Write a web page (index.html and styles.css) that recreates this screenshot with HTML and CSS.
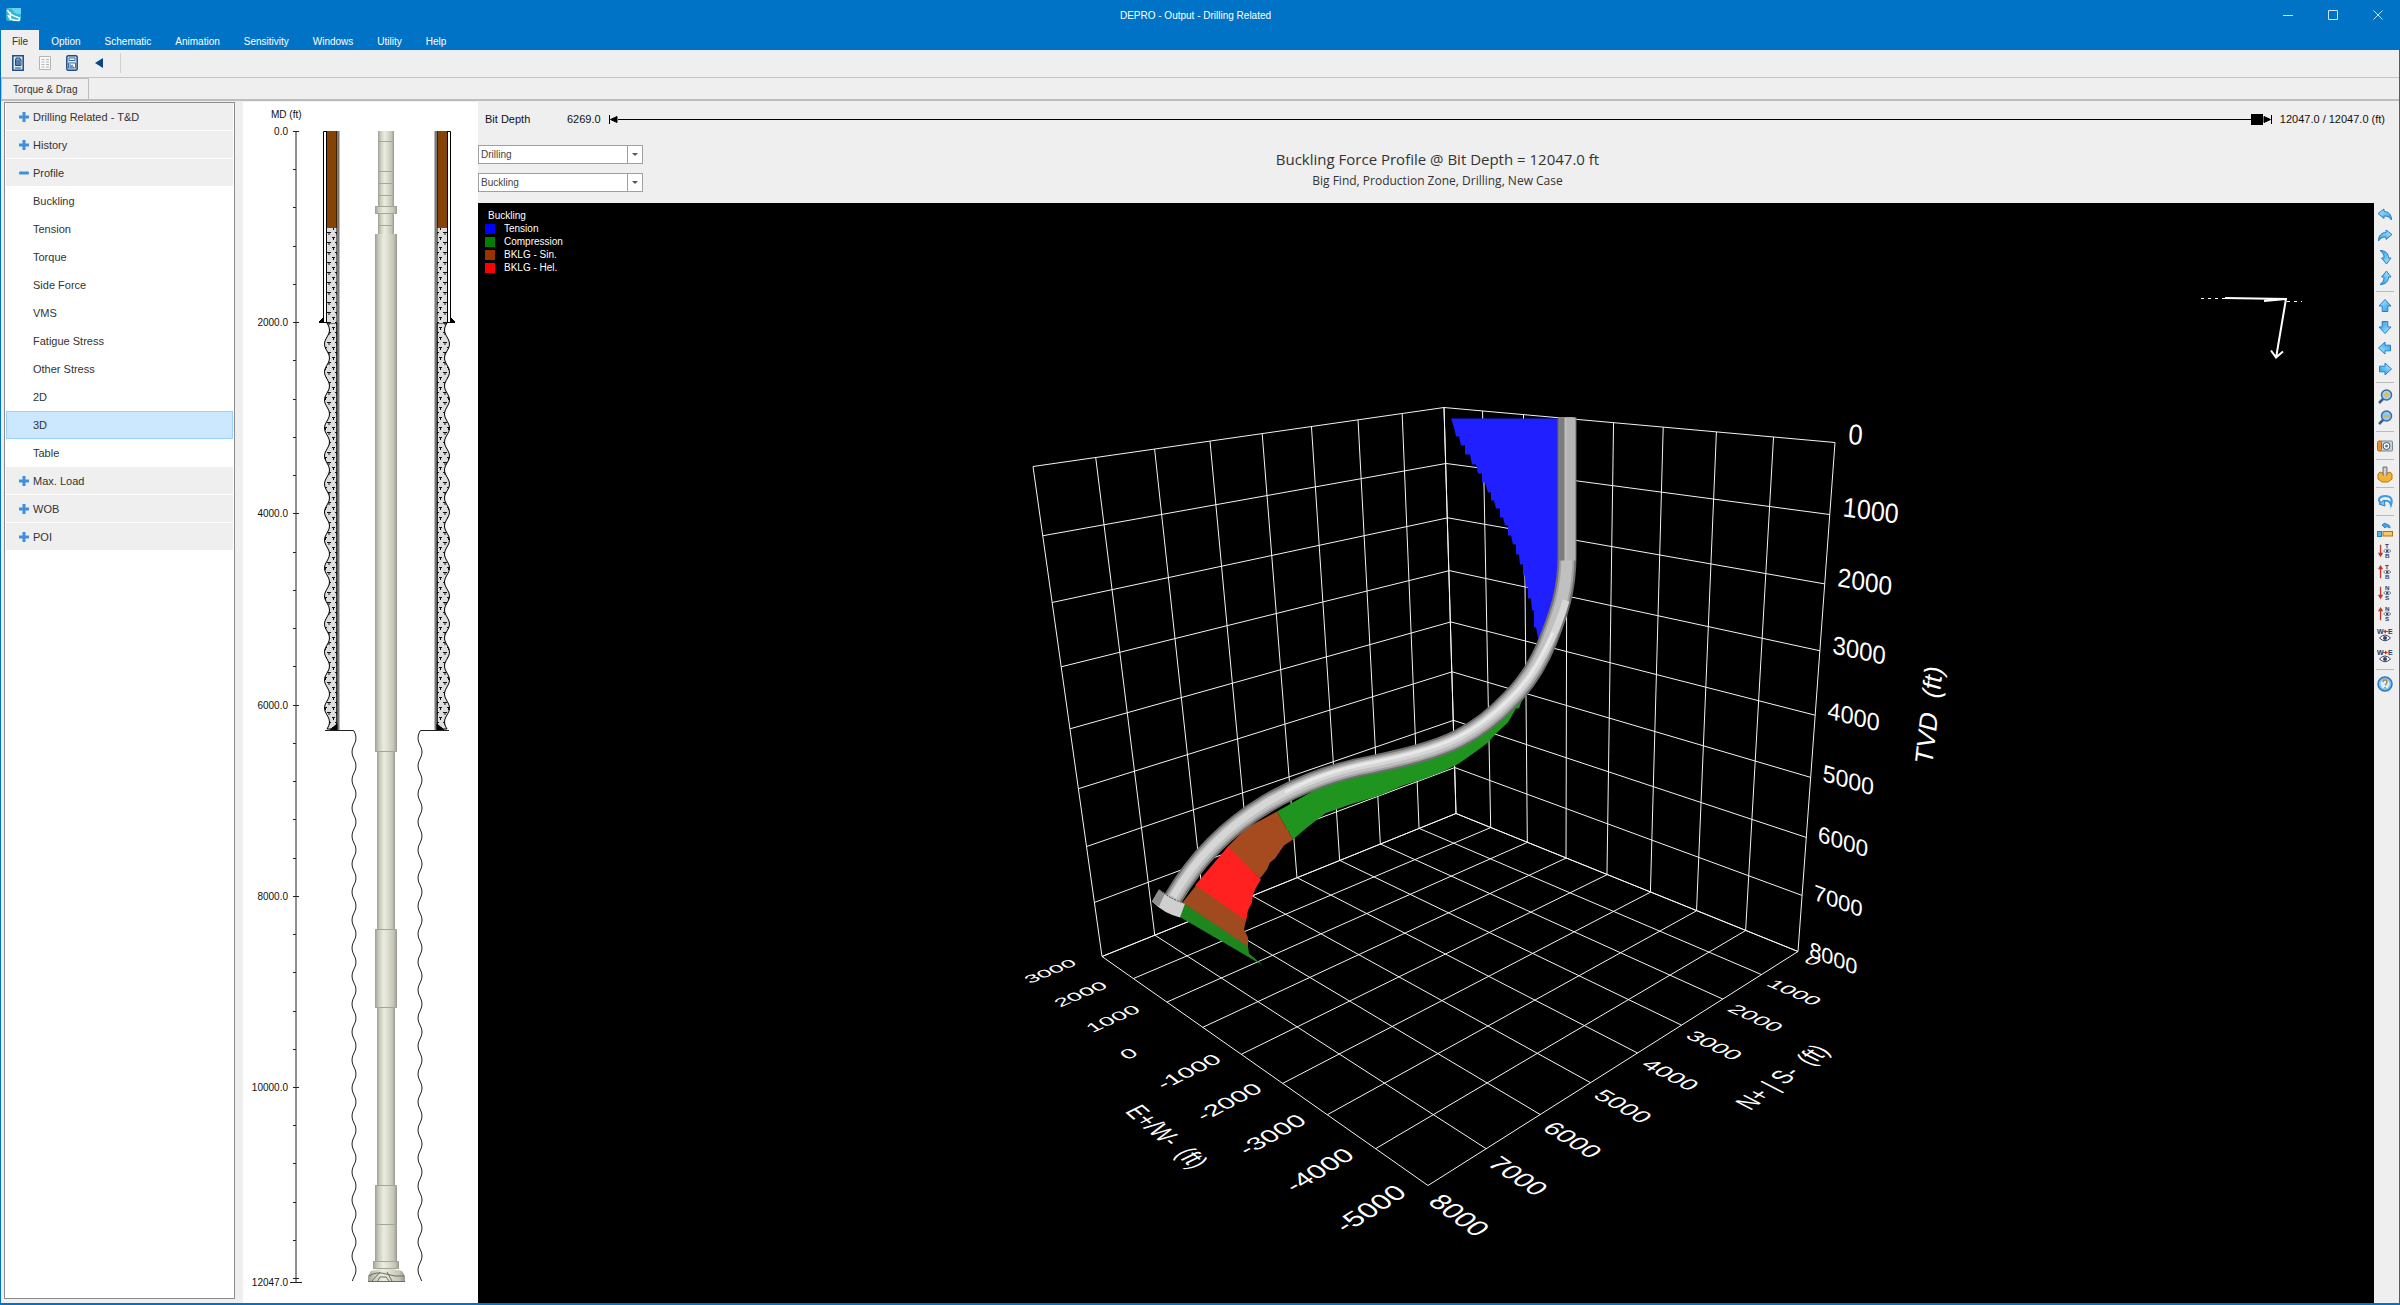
FILE: index.html
```html
<!DOCTYPE html>
<html lang="en">
<head>
  <meta charset="UTF-8">
  <meta name="viewport" content="width=device-width, initial-scale=1.0">
  <title>DEPRO - Output - Drilling Related</title>
  <link rel="stylesheet" href="styles.css">
</head>
<body>
  <!-- Shared icons -->
  <svg class="defs" aria-hidden="true">
    <defs>
      <linearGradient id="blueFill" x1="0" y1="0" x2="1" y2="1">
        <stop offset="0" stop-color="#b5ecff"/>
        <stop offset="1" stop-color="#1f9be8"/>
      </linearGradient>
      <symbol id="arrow" viewBox="0 0 16 16">
        <path d="M8 1.500 14 8h-3.200v5.500H5.200V8H2z" fill="url(#blueFill)" stroke="#2a7fc4" stroke-linejoin="round"/>
      </symbol>
      <symbol id="bend" viewBox="0 0 16 16">
        <path d="M1 6.500 7 2v2.500c4.500 0 7.500 3 7.500 8.500-2-3-4-4-7.500-4V11.500z" fill="url(#blueFill)" stroke="#2a7fc4" stroke-linejoin="round"/>
      </symbol>
      <symbol id="eye" viewBox="0 0 12 8">
        <path d="M.5 4Q6-2 11.500 4 6 9.500.5 4z" fill="#fff" stroke="#34466a"/>
        <circle cx="6" cy="4" r="2" fill="#34466a"/>
      </symbol>
      <symbol id="plus" viewBox="0 0 12 12">
        <path d="M4.500 1h3v3.500H11v3H7.500V11h-3V7.500H1v-3h3.500z" fill="#3f8fdc"/>
      </symbol>
      <symbol id="minus" viewBox="0 0 12 12">
        <rect x="1" y="4.500" width="10" height="3" rx="1" fill="#3f8fdc"/>
      </symbol>
    </defs>
  </svg>

  <header class="titlebar">
    <svg class="app-logo" viewBox="0 0 16 14" aria-hidden="true">
      <rect width="15" height="13" rx="2" fill="#2fb4d8"/>
      <path d="M0 0h15v6Q8 7 6 1z" fill="#68d4ea"/>
      <path d="M1.500 2Q3 7 13.500 10l-.5 2.500Q4 13 2 7M4 4q1 5 0 8" fill="none" stroke="#fff" stroke-width="1.500"/>
    </svg>
    <h1 class="title">DEPRO - Output - Drilling Related</h1>
    <div class="window-buttons">
      <button aria-label="Minimize"><svg viewBox="0 0 10 10"><path d="M0 5.500h10"/></svg></button>
      <button aria-label="Maximize"><svg viewBox="0 0 10 10"><path d="M.5.5h9v9h-9z"/></svg></button>
      <button aria-label="Close"><svg viewBox="0 0 10 10"><path d="M.5.5l9 9M9.500.5l-9 9"/></svg></button>
    </div>
  </header>

  <nav class="menu">
    <button class="active">File</button>
    <button>Option</button>
    <button>Schematic</button>
    <button>Animation</button>
    <button>Sensitivity</button>
    <button>Windows</button>
    <button>Utility</button>
    <button>Help</button>
  </nav>

  <div class="toolbar">
    <button aria-label="Report">
      <svg viewBox="0 0 12 16"><path d="M.8.8h10.400v14.400H.800z" fill="#dbe8f4" stroke="#1e4f80" stroke-width="1.500"/><path d="M4 3h4v1.500h1v6H3.500v-6H4zM5 5v6M7 5v6M3 13h6" fill="#8aabca" stroke="#1e4f80"/></svg>
    </button>
    <button aria-label="Table">
      <svg viewBox="0 0 12 16"><path d="M.5 1.500h11v13H.500z" fill="#f8f8f8" stroke="#b5b5b5"/><path d="M2.500 4.500h3M7 4.500h3M2.500 7h3M7 7h3M2.500 9.500h3M7 9.500h3M2.500 12h3M7 12h3" stroke="#b5b5b5"/></svg>
    </button>
    <button aria-label="Calculator">
      <svg viewBox="0 0 12 16"><rect x=".8" y=".8" width="10.400" height="14.400" rx="1.500" fill="#d4e3f0" stroke="#1e4f80" stroke-width="1.500"/><path d="M3 3h6v2.500H3z" fill="#fff" stroke="#3c6f9e"/><path d="M2.500 8h7v5h-7zM4 9v3h4M5 11l2-1" fill="#fff" stroke="#3c6f9e"/></svg>
    </button>
    <button aria-label="Back">
      <svg viewBox="0 0 12 16"><path d="M10 3v10L2 8z" fill="#0c4680"/></svg>
    </button>
  </div>

  <div class="tabs"><button>Torque &amp; Drag</button></div>

  <main class="content">
    <nav class="sidebar">
      <button class="group"><svg><use href="#plus"/></svg>Drilling Related - T&amp;D</button>
      <button class="group"><svg><use href="#plus"/></svg>History</button>
      <button class="group"><svg><use href="#minus"/></svg>Profile</button>
      <button class="item">Buckling</button>
      <button class="item">Tension</button>
      <button class="item">Torque</button>
      <button class="item">Side Force</button>
      <button class="item">VMS</button>
      <button class="item">Fatigue Stress</button>
      <button class="item">Other Stress</button>
      <button class="item">2D</button>
      <button class="item selected">3D</button>
      <button class="item">Table</button>
      <button class="group"><svg><use href="#plus"/></svg>Max. Load</button>
      <button class="group"><svg><use href="#plus"/></svg>WOB</button>
      <button class="group"><svg><use href="#plus"/></svg>POI</button>
    </nav>

    <section class="schematic">
      <svg viewBox="243 102 235 1198" preserveAspectRatio="xMinYMin meet">
        <defs>
          <linearGradient id="pipe">
            <stop offset="0" stop-color="#9c9e92"/>
            <stop offset=".15" stop-color="#c6c8ba"/>
            <stop offset=".4" stop-color="#ecede0"/>
            <stop offset=".6" stop-color="#dcddcf"/>
            <stop offset=".85" stop-color="#c2c4b6"/>
            <stop offset="1" stop-color="#969889"/>
          </linearGradient>
          <pattern id="brick" width="8" height="10" patternUnits="userSpaceOnUse" x="327">
            <rect width="8" height="10" fill="#dedede"/>
            <path d="M0 2.500h4M2 2.500v2.500M5 7.500h3M6.500 7.500v2.500" stroke="#111"/>
          </pattern>
          <g id="wellSide">
            <path id="formation" fill="url(#brick)" stroke="#000"/>
            <path d="M327 228h10v95h-10z" fill="url(#brick)"/>
            <path d="M327 131h10v97h-10z" fill="#854305"/>
            <path d="M323.500 322V131.500h3.500M326.500 131v191M337 131v599" fill="none" stroke="#000"/>
            <path d="M338.500 131v599" stroke="#777" stroke-width="2"/>
            <path d="M319 322.500h8M323 318v4h-4zM337 724v6h-7z" stroke="#000"/>
            <path id="openHole" fill="none" stroke="#222"/>
          </g>
        </defs>
        <text x="271" y="118">MD (ft)</text>
        <g id="depthAxis"></g>
        <use href="#wellSide"/>
        <use href="#wellSide" transform="translate(774 0) scale(-1 1)"/>
        <g fill="url(#pipe)">
          <rect x="378" y="131" width="16" height="104"/>
          <rect x="375" y="206" width="22" height="8" rx="1"/>
          <rect x="375" y="234" width="22" height="518"/>
          <rect x="377" y="752" width="18" height="178"/>
          <rect x="375" y="930" width="22" height="78"/>
          <rect x="377" y="1008" width="18" height="178"/>
          <rect x="375" y="1186" width="22" height="76"/>
          <rect x="373" y="1261" width="26" height="8" rx="1"/>
          <path d="M371 1271q15-5 31 0l3 5v6h-37v-6z"/>
        </g>
        <path d="M378 141.500h16M378 171.500h16M378 183.500h16M378 195.500h16M378 225.500h16M375 206.500h22M375 213.500h22M375 751.500h22M375 929.500h22M375 1007.500h22M375 1185.500h22M375 1224.500h22M373 1261.500h26M373 1268.500h26" stroke="#a3a598"/>
        <path d="M369 1276q8-5 17-2t18 2M372 1281l8-9M392 1281l-5-9M368 1281.500h37M377 1282l3-5h6l4 5" stroke="#6d6e62" fill="none"/>
      </svg>
    </section>

    <section class="viewer">
      <div class="depth">
        <label for="bitDepth">Bit Depth</label>
        <output>6269.0</output>
        <svg class="stop" viewBox="0 0 9 9"><path d="M.5 0v9"/><path d="M1.500 4.500 8 1.500v6z"/></svg>
        <input type="range" id="bitDepth" min="6269" max="12047" value="12047">
        <svg class="stop" viewBox="0 0 9 9"><path d="M8.500 0v9"/><path d="M7.500 4.500 1 1.500v6z"/></svg>
        <output>12047.0 / 12047.0 (ft)</output>
      </div>

      <div class="heading">
        <div class="selects">
          <div class="select"><select aria-label="Operation"><option>Drilling</option></select></div>
          <div class="select"><select aria-label="Result"><option>Buckling</option></select></div>
        </div>
        <div class="caption">
          <h2>Buckling Force Profile @ Bit Depth = 12047.0 ft</h2>
          <p>Big Find, Production Zone, Drilling, New Case</p>
        </div>
      </div>

      <div class="stage">
        <div class="canvas">
          <ul class="legend">
            <li class="legend-title">Buckling</li>
            <li class="tension">Tension</li>
            <li class="compression">Compression</li>
            <li class="sinusoidal">BKLG - Sin.</li>
            <li class="helical">BKLG - Hel.</li>
          </ul>
          <svg class="scene" viewBox="478 204 1896 1097">
            <defs>
              <path id="wellPath" d="M1567 417V555C1567 590 1559 612 1548 640C1538 665 1527 682 1511 698C1496 714 1479 728 1459 738C1433 751 1400 758 1373 764C1333 771 1296 786 1267 803C1232 824 1198 855 1173 898"/>
            </defs>
            <path id="grid" class="grid"/>

            <path fill="#1f1fff" d="M1451 418H1567V560L1556 620 1542 645 1538 637 1536 627H1534V610H1532L1531 598H1528V587H1526L1525 575H1523V564H1520L1519 554H1516V544H1513L1511 535H1508V525H1505L1503 517H1500V508H1496L1494 500H1491V492H1488L1485 482H1482V473H1478L1476 464H1472L1470 454H1465V445H1461L1459 436H1456L1454 427Z"/>
            <path fill="#1f951f" d="M1523 697L1519 708H1516L1508 722 1497 732 1488 742 1476 751 1459 763 1443 771 1425 778 1403 785 1380 795 1350 804 1325 813 1307 827 1293 839 1277 811 1333 779 1413 757 1470 738Z"/>
            <path fill="#a64b20" d="M1277 811l16 28-9 6-9 13-5 4-3 7-7 9-33-31 20-20z"/>
            <path fill="#ff2020" d="M1228 846l33 33-5 8-3 7-1 8-4 8-2 11-51-36z"/>
            <path fill="#a04a20" d="M1196 885l50 35-2 9 4 8v10l-67-43z"/>
            <path fill="#1f851f" d="M1184 903l64 43 1 7 14 12-84-49z"/>

            <g class="tube">
              <use href="#wellPath" stroke="#6f6f6f" stroke-width="19"/>
              <use href="#wellPath" stroke="#a2a2a2" stroke-width="15"/>
              <use href="#wellPath" stroke="#c0c0c0" stroke-width="11"/>
              <path d="M1571 417V560" stroke="#b4b4b4" stroke-width="9"/>
              <path d="M1562 417V560" stroke="#7c7c7c" stroke-width="5"/>
              <path d="M1566 600C1557 632 1536 674 1511 698C1496 713 1479 727 1459 737C1433 750 1400 757 1373 763C1333 770 1296 785 1267 802C1232 823 1198 854 1173 896" stroke="#d6d6d6" stroke-width="7"/>
              <path d="M1553 632C1538 665 1527 681 1511 697C1496 712 1479 726 1459 736C1433 749 1400 756 1373 762C1340 768 1310 778 1285 792" stroke="#e8e8e8" stroke-width="3"/>
            </g>
            <path d="M1159 889q14 10 26 14l-5 14q-16-4-28-16z" fill="#cfcfcf"/>
            <path d="M1159 889l-7 12 7 5 6-13z" fill="#909090"/>
            <path d="M1159 889q12 10 26 14" stroke="#444" stroke-dasharray="2 1" fill="none"/>

            <g id="axisLabels" class="axis-labels"></g>

            <g fill="none" stroke="#fff" stroke-width="2">
              <path d="M2225 297.500l61 1-10 59M2271 350l5 7 7-6M2264 300.500l22-2"/>
              <path d="M2201 298h24M2287 301h15" stroke-width="1" stroke-dasharray="3 4"/>
            </g>
          </svg>
        </div>

        <div class="tools">
          <button aria-label="Rotate left"><svg><use href="#bend"/></svg></button>
          <button aria-label="Rotate right"><svg class="mirror"><use href="#bend"/></svg></button>
          <button aria-label="Tilt down"><svg class="tilt-down"><use href="#bend"/></svg></button>
          <button aria-label="Tilt up"><svg class="tilt-up"><use href="#bend"/></svg></button>
          <hr>
          <button aria-label="Move up"><svg><use href="#arrow"/></svg></button>
          <button aria-label="Move down"><svg class="down"><use href="#arrow"/></svg></button>
          <button aria-label="Move left"><svg class="left"><use href="#arrow"/></svg></button>
          <button aria-label="Move right"><svg class="right"><use href="#arrow"/></svg></button>
          <hr>
          <button aria-label="Zoom in"><svg viewBox="0 0 16 16"><path d="M2 14l5-5" stroke="#445c8c" stroke-width="2.500"/><circle cx="9.500" cy="6" r="5" fill="#a8d4f4" stroke="#3a6cac" stroke-width="1.500"/><path d="M6.500 6h6M9.500 3v6" stroke="#d8c050" stroke-width="2"/></svg></button>
          <button aria-label="Zoom out"><svg viewBox="0 0 16 16"><path d="M2 14l5-5" stroke="#445c8c" stroke-width="2.500"/><circle cx="9.500" cy="6" r="5" fill="#8cccf4" stroke="#3a6cac" stroke-width="1.500"/><path d="M6.500 6h6" stroke="#c8b860" stroke-width="2"/></svg></button>
          <hr>
          <button aria-label="Snapshot"><svg viewBox="0 0 16 16"><rect x="3" y="3" width="12.500" height="10" rx="1" fill="#c9d2da" stroke="#7b8791"/><rect x=".5" y="3" width="4" height="10" rx="1.500" fill="#f0912e" stroke="#b8651a"/><circle cx="9.500" cy="8" r="3.500" fill="#fff" stroke="#44576a"/><circle cx="9.500" cy="8" r="1.500" fill="#56789a"/></svg></button>
          <hr>
          <button aria-label="Settings"><svg viewBox="0 0 16 16"><path d="M1 8l2-2 2 1 3-2 3 2 2-1 2 2v5l-4 3H5l-4-3z" fill="#f5b335" stroke="#b5761a"/><path d="M6 1h4v8H6z" fill="#b9b9b9" stroke="#777"/><path d="M8 2v8" stroke="#eee"/></svg></button>
          <hr>
          <button aria-label="Spin"><svg viewBox="0 0 16 16"><path d="M4 9C-1 5 4 2 8 2c6 0 8 3 6 9-1-4-4-5-7-4" fill="none" stroke="#3a9be4" stroke-width="2"/><path d="M2 10l5-4 1 6z" fill="#7fc8f5" stroke="#2a7fc4"/></svg></button>
          <hr>
          <button aria-label="Restore view"><svg viewBox="0 0 16 16"><path d="M5 3l3-2v1q5 0 5 4-2-2-5-1v1z" fill="#4aa8ea" stroke="#2a7fc4"/><rect x=".5" y="9.500" width="4" height="5" fill="#58b4f0" stroke="#2a7fc4"/><rect x="6" y="9.500" width="9.500" height="4.500" fill="#f6c667" stroke="#a87722"/></svg></button>
          <button aria-label="View top to bottom"><svg viewBox="0 0 16 18"><path d="M3 2v11" stroke="#c0392b" stroke-width="1.500"/><path d="M0 11h6l-3 5z" fill="#c0392b"/><text x="8" y="6">T</text><text x="8" y="17">B</text><use href="#eye" x="6" y="6" width="9" height="6"/></svg></button>
          <button aria-label="View bottom to top"><svg viewBox="0 0 16 18"><path d="M3 4v12" stroke="#c0392b" stroke-width="1.500"/><path d="M0 6h6L3 1z" fill="#c0392b"/><text x="8" y="6">T</text><text x="8" y="17">B</text><use href="#eye" x="6" y="6" width="9" height="6"/></svg></button>
          <button aria-label="View north to south"><svg viewBox="0 0 16 18"><path d="M3 2v11" stroke="#c0392b" stroke-width="1.500"/><path d="M0 11h6l-3 5z" fill="#c0392b"/><text x="8" y="6">N</text><text x="8" y="17">S</text><use href="#eye" x="6" y="6" width="9" height="6"/></svg></button>
          <button aria-label="View south to north"><svg viewBox="0 0 16 18"><path d="M3 4v12" stroke="#c0392b" stroke-width="1.500"/><path d="M0 6h6L3 1z" fill="#c0392b"/><text x="8" y="6">N</text><text x="8" y="17">S</text><use href="#eye" x="6" y="6" width="9" height="6"/></svg></button>
          <button aria-label="View east to west"><svg viewBox="0 0 16 16"><text x="0" y="7">W</text><text x="11" y="7">E</text><path d="M7 4.500h4" stroke="#c0392b"/><path d="M6 4.500l3-2v4z" fill="#c0392b"/><use href="#eye" x="2" y="7" width="12" height="8"/></svg></button>
          <button aria-label="View west to east"><svg viewBox="0 0 16 16"><text x="0" y="7">W</text><text x="11" y="7">E</text><path d="M6 4.500h4" stroke="#c0392b"/><path d="M11 4.500l-3-2v4z" fill="#c0392b"/><use href="#eye" x="2" y="7" width="12" height="8"/></svg></button>
          <hr>
          <button aria-label="Help"><svg viewBox="0 0 16 16"><circle cx="8" cy="8" r="7" fill="#7cc0ee" stroke="#2d78bd" stroke-width="1.500"/><circle cx="8" cy="8" r="4.500" fill="#d9effb"/><path d="M6 6q0-2 2-2t2 2-2 3M8 11v1.500" fill="none" stroke="#b58a3a" stroke-width="1.500"/></svg></button>
        </div>
      </div>
    </section>
  </main>

  <script src="script.js"></script>
</body>
</html>
```
FILE: styles.css
```css
* {
  margin: 0;
  padding: 0;
  box-sizing: border-box;
}

body {
  display: flex;
  flex-direction: column;
  height: 100vh;
  border: 1px solid #0173c7;
  border-top: none;
  border-bottom-width: 2px;
  background-color: #efefef;
  color: #333;
  font-family: "Liberation Sans", Arial, sans-serif;
  font-size: 11px;
  overflow: hidden;
}

button {
  border: none;
  background: none;
  color: inherit;
  font: inherit;
}

.defs {
  position: absolute;
  width: 0;
  height: 0;
}

/* Title bar and menu */
.titlebar {
  display: grid;
  grid-template-columns: 1fr auto 1fr;
  align-items: center;
  height: 30px;
  padding: 0 14px 0 5px;
  background-color: #0173c7;
  color: #fff;
}

.app-logo {
  width: 16px;
  height: 14px;
}

.title {
  font-size: 10px;
  font-weight: 400;
}

.window-buttons {
  display: flex;
  justify-content: flex-end;
  gap: 33px;
}

.window-buttons button {
  width: 12px;
  height: 12px;
}

.window-buttons svg {
  display: block;
  width: 10px;
  height: 10px;
  fill: none;
  stroke: #cfe4f5;
}

.menu {
  display: flex;
  height: 20px;
  background-color: #0173c7;
}

.menu button {
  padding: 2px 12px 0;
  color: #fff;
  font-size: 10px;
}

.menu .active {
  padding: 2px 11px 0;
  background-color: #efefef;
  color: #333;
}

.toolbar {
  display: flex;
  align-items: center;
  gap: 15px;
  height: 28px;
  padding: 0 0 2px 11px;
  border-bottom: 1px solid #c4c4c4;
}

.toolbar svg {
  display: block;
  width: 12px;
  height: 16px;
}

.toolbar::after {
  content: "";
  width: 1px;
  height: 20px;
  background-color: #d0d0d0;
}

.tabs {
  display: flex;
  align-items: flex-end;
  height: 23px;
  border-bottom: 2px solid #bdbdbd;
}

.tabs button {
  height: 21px;
  padding: 0 11px;
  border: 1px solid #bdbdbd;
  border-bottom: none;
  font-size: 10px;
}

/* Main area */
.content {
  display: grid;
  grid-template-columns: 231px 235px 1fr;
  column-gap: 8px;
  flex: 1;
  min-height: 0;
  padding: 1px 2px 0 3px;
}

.sidebar {
  display: flex;
  flex-direction: column;
  margin-bottom: 4px;
  padding: 0 1px;
  border: 1px solid #8c8c8c;
  background-color: #fff;
}

.sidebar button {
  display: flex;
  align-items: center;
  gap: 3px;
  height: 28px;
  border-bottom: 1px solid #fff;
  text-align: left;
}

.sidebar .group {
  padding-left: 12px;
  background-color: #efefef;
}

.sidebar .item {
  padding-left: 27px;
}

.sidebar .selected {
  border: 1px solid #99d1ff;
  background-color: #cce8ff;
  padding-left: 26px;
}

.sidebar svg {
  width: 12px;
  height: 12px;
}

.schematic {
  min-height: 0;
  background-color: #fff;
}

.schematic svg {
  display: block;
  width: 100%;
  height: 100%;
}

.schematic text {
  fill: #111;
  font-size: 10px;
}

.schematic .depth-value {
  text-anchor: end;
}

.viewer {
  display: flex;
  flex-direction: column;
  min-width: 0;
  min-height: 0;
  margin-left: -8px;
}

.depth {
  display: flex;
  align-items: center;
  height: 34px;
  padding: 0 12px 0 7px;
  color: #111;
}

.depth label {
  width: 82px;
}

.depth output:last-child {
  padding-left: 8px;
}

.stop {
  width: 9px;
  height: 9px;
  stroke: #000;
}

.depth output + .stop {
  margin-left: 8px;
}

.depth input {
  flex: 1;
  height: 12px;
  appearance: none;
  background: linear-gradient(#000, #000) center / 100% 1px no-repeat;
}

.depth input::-webkit-slider-thumb {
  appearance: none;
  width: 12px;
  height: 11px;
  background-color: #000;
}

.heading {
  display: grid;
  grid-template-columns: 165px 1fr 165px;
  height: 67px;
  padding-top: 9px;
}

.selects {
  display: flex;
  flex-direction: column;
  gap: 9px;
}

.select {
  position: relative;
  height: 19px;
}

.select select {
  width: 100%;
  height: 19px;
  padding-left: 2px;
  appearance: none;
  border: 1px solid #a0a0a0;
  border-radius: 0;
  background: linear-gradient(#a0a0a0, #a0a0a0) right 14px top / 1px 100% no-repeat #fff;
  color: #444;
  font: inherit;
  font-size: 10px;
}

.select::after {
  content: "";
  position: absolute;
  top: 8px;
  right: 5px;
  border: 3px solid transparent;
  border-top-color: #555;
}

.caption {
  padding-top: 4px;
  text-align: center;
  font-family: "Open Sans", sans-serif;
}

.caption h2 {
  font-size: 15px;
  font-weight: 400;
  line-height: 20px;
}

.caption p {
  padding-top: 4px;
  font-size: 12px;
  line-height: 16px;
}

.stage {
  display: grid;
  grid-template-columns: 1fr 23px;
  flex: 1;
  min-height: 0;
}

.canvas {
  position: relative;
  min-height: 0;
  background-color: #000;
}

.scene {
  display: block;
  width: 100%;
  height: 100%;
}

.legend {
  position: absolute;
  top: 6px;
  left: 7px;
  list-style: none;
  color: #fff;
  font-size: 10px;
  line-height: 13px;
}

.legend li {
  display: flex;
  align-items: center;
  gap: 9px;
}

.legend li::before {
  content: "";
  width: 10px;
  height: 10px;
}

.legend .legend-title {
  padding-left: 3px;
}

.legend .legend-title::before {
  display: none;
}

.tension::before { background-color: #0000ff; }
.compression::before { background-color: #008000; }
.sinusoidal::before { background-color: #993300; }
.helical::before { background-color: #ff0000; }

.grid {
  fill: none;
  stroke: #f4f4f4;
}

.tube {
  fill: none;
}

.axis-labels {
  fill: #fff;
  font-size: 20px;
}

/* View tools on the right edge */
.tools {
  display: flex;
  flex-direction: column;
  padding: 1px 3px 0 2px;
}

.tools button {
  display: flex;
  align-items: center;
  justify-content: center;
  height: 21px;
}

.tools svg {
  width: 16px;
  height: 16px;
  overflow: visible;
}

.tools text {
  fill: #2c3e66;
  font-size: 7px;
  font-weight: 700;
}

.tools hr {
  margin: 3px 0;
  border: none;
  border-top: 1px solid #bbb;
}

.mirror { transform: scaleX(-1); }
.tilt-down { transform: scaleX(-1) rotate(-90deg); }
.tilt-up { transform: rotate(90deg); }
.down { transform: rotate(180deg); }
.left { transform: rotate(-90deg); }
.right { transform: rotate(90deg); }
```
FILE: script.js
```js
const SVG_NS = 'http://www.w3.org/2000/svg';
const CELLS = 8;

function addText(parent, text, attributes) {
  const node = document.createElementNS(SVG_NS, 'text');
  node.textContent = text;
  for (const name in attributes) {
    node.setAttribute(name, attributes[name]);
  }
  parent.appendChild(node);
}

// Projects a plane of 8 x 8 cells onto the screen, given its four corners
function plane(p0, p1, p2, p3) {
  const dx1 = p1[0] - p2[0], dy1 = p1[1] - p2[1];
  const dx2 = p3[0] - p2[0], dy2 = p3[1] - p2[1];
  const sx = p0[0] - p1[0] + p2[0] - p3[0];
  const sy = p0[1] - p1[1] + p2[1] - p3[1];
  const det = dx1 * dy2 - dx2 * dy1;
  const g = (sx * dy2 - dx2 * sy) / det;
  const h = (dx1 * sy - sx * dy1) / det;
  return function (u, v) {
    u /= CELLS;
    v /= CELLS;
    const w = g * u + h * v + 1;
    return [
      ((p1[0] - p0[0] + g * p1[0]) * u + (p3[0] - p0[0] + h * p3[0]) * v + p0[0]) / w,
      ((p1[1] - p0[1] + g * p1[1]) * u + (p3[1] - p0[1] + h * p3[1]) * v + p0[1]) / w
    ];
  };
}

const backTop = [1444, 407];
const leftTop = [1033, 466];
const rightTop = [1835, 442];
const backBottom = [1456, 813];
const leftBottom = [1102, 956];
const rightBottom = [1798, 951];
const front = [1428, 1185];

const floor = plane(backBottom, rightBottom, front, leftBottom);
const leftWall = plane(backTop, leftTop, leftBottom, backBottom);
const rightWall = plane(backTop, rightTop, rightBottom, backBottom);

// Grid lines
let d = '';
[floor, leftWall, rightWall].forEach(function (map) {
  for (let i = 0; i <= CELLS; i++) {
    d += 'M' + map(i, 0) + 'L' + map(i, CELLS);
    d += 'M' + map(0, i) + 'L' + map(CELLS, i);
  }
});
document.getElementById('grid').setAttribute('d', d);

// Text that lies in a plane: "along" is its reading direction, "down" points below the baseline
const labels = document.getElementById('axisLabels');
function label(map, text, u, v, along, down) {
  const unit = 0.019;
  const o = map(u, v);
  const x = map(u + along[0], v + along[1]);
  const y = map(u - down[0] / 2, v - down[1] / 2);
  const m = [
    (x[0] - o[0]) * unit, (x[1] - o[1]) * unit,
    (o[0] - y[0]) * 2 * unit, (o[1] - y[1]) * 2 * unit,
    o[0], o[1]
  ];
  addText(labels, text, { transform: 'matrix(' + m.join(' ') + ')' });
}

for (let i = 0; i <= CELLS; i++) {
  label(rightWall, String(i * 1000), 8.2, i, [1, 0], [0, 1]);
  label(floor, String(i * 1000), 8.22, i + 0.22, [1, 0], [0, 1]);
  label(floor, String(3000 - i * 1000), i - 0.05, 9.25, [0, -1], [1, 0]);
}
label(rightWall, 'TVD\u00a0 (ft)', 9.9, 4.3, [0, -1], [1, 0]);
label(floor, 'E+/W-\u00a0 (ft)', 4, 9.9, [1, 0], [0, 1]);
label(floor, 'N+ | S-\u00a0 (ft)', 9.9, 4, [0, -1], [1, 0]);

// Measured depth axis
const axis = document.getElementById('depthAxis');
const toY = depth => 131 + depth * 0.0956;
let ticks = 'M296 131V1283M290 1282.500H302';
for (let depth = 0; depth <= 12000; depth += 400) {
  const major = depth % 2000 === 0;
  const y = Math.round(toY(depth)) + 0.5;
  ticks += 'M293 ' + y + 'H' + (major ? 299 : 296);
  if (major && depth < 12000) {
    addText(axis, depth.toFixed(1), { x: 288, y: y + 3, class: 'depth-value' });
  }
}
addText(axis, '12047.0', { x: 288, y: 1286, class: 'depth-value' });
const axisPath = document.createElementNS(SVG_NS, 'path');
axisPath.setAttribute('d', ticks);
axisPath.setAttribute('stroke', '#222');
axis.appendChild(axisPath);

// Wavy borehole walls
function wave(x, amplitude, from, to) {
  let path = '';
  for (let y = from; y <= to; y += 2) {
    path += 'L' + (x + amplitude * Math.sin((y - from) / 28 * 2 * Math.PI)).toFixed(1) + ' ' + y;
  }
  return path;
}
document.getElementById('formation').setAttribute('d', 'M337 323' + wave(327, 2.5, 323, 729) + 'H337z');
document.getElementById('openHole').setAttribute('d', 'M325 730.500H353' + wave(354, 2, 731, 1282));
```
